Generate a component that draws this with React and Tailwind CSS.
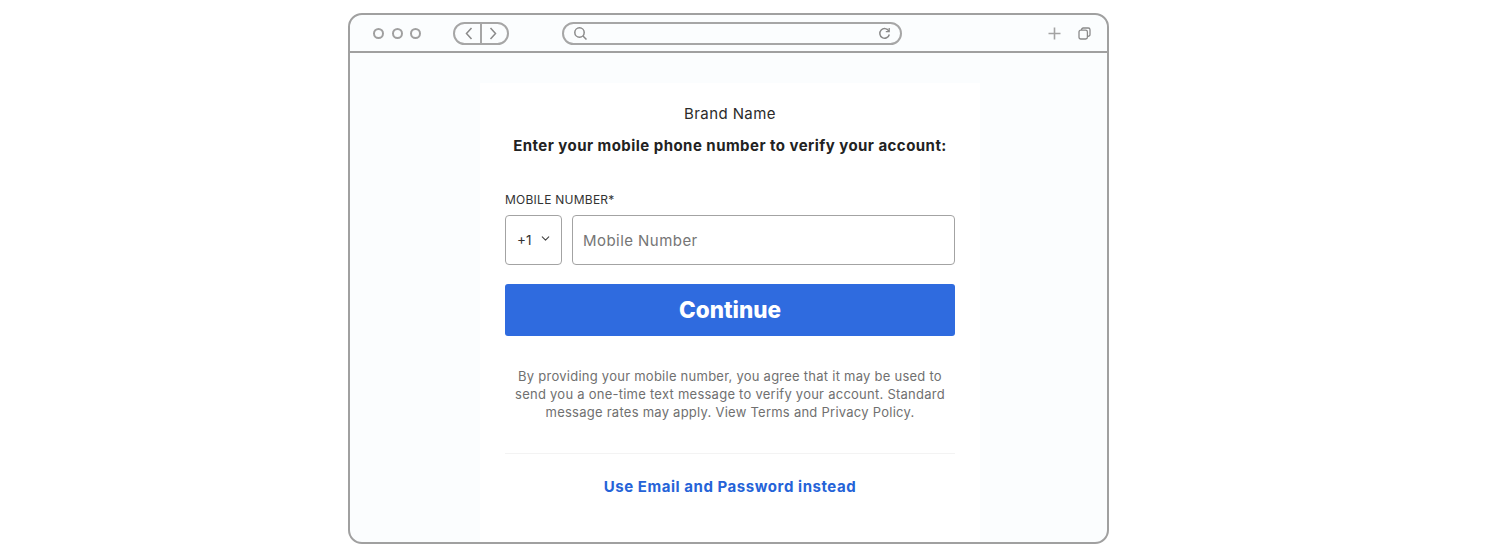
import { ChevronDown } from 'lucide-react';

const Toolbar = () => (
  <div className="flex items-center h-[38px] border-b-2 border-[#a0a0a0] pl-[23px] pr-[16px] shrink-0">
    {/* window dots */}
    <div className="flex gap-[7.5px]">
      <span className="w-[11px] h-[11px] rounded-full border-2 border-[#a0a0a0]" />
      <span className="w-[11px] h-[11px] rounded-full border-2 border-[#a0a0a0]" />
      <span className="w-[11px] h-[11px] rounded-full border-2 border-[#a0a0a0]" />
    </div>

    {/* back / forward */}
    <div className="flex items-center w-[56px] h-[23px] ml-[32px] rounded-full border-2 border-[#a6a6a6]">
      <div className="flex-1 h-full flex items-center justify-center border-r-2 border-[#a6a6a6] pl-[3px]">
        <svg width="8" height="13" viewBox="0 0 8 13" fill="none" stroke="#8a8a8a" strokeWidth="1.5">
          <path d="M6.5 1 L1.5 6.5 L6.5 12" />
        </svg>
      </div>
      <div className="flex-1 h-full flex items-center justify-center pr-[3px]">
        <svg width="8" height="13" viewBox="0 0 8 13" fill="none" stroke="#8a8a8a" strokeWidth="1.5">
          <path d="M1.5 1 L6.5 6.5 L1.5 12" />
        </svg>
      </div>
    </div>

    {/* address bar */}
    <div className="flex items-center justify-between w-[340px] h-[23px] ml-[53px] rounded-full border-2 border-[#a6a6a6] px-[9px]">
      <svg width="15" height="15" viewBox="0 0 15 15" fill="none" stroke="#8a8a8a" strokeWidth="1.5">
        <circle cx="6.5" cy="6.5" r="4.7" />
        <path d="M10 10 L13.5 13.5" />
      </svg>
      <svg width="13" height="13" viewBox="0 0 13 13" fill="none" stroke="#8a8a8a" strokeWidth="1.5">
        <path d="M10.8 4 A4.8 4.8 0 1 0 11.3 7.5" />
        <path d="M11.2 1 V4.6 H7.8" strokeWidth="1.3" />
      </svg>
    </div>

    <div className="flex items-center gap-[17px] ml-auto">
      <svg width="13" height="13" viewBox="0 0 13 13" fill="none" stroke="#a3a3a3" strokeWidth="1.6">
        <path d="M6.5 0.5 V12.5 M0.5 6.5 H12.5" />
      </svg>
      <svg width="13" height="13" viewBox="0 0 13 13" fill="none" stroke="#8a8a8a" strokeWidth="1.3">
        <rect x="1" y="3.2" width="8.4" height="8.8" rx="1.8" />
        <path d="M3.6 3 V2.6 A1.6 1.6 0 0 1 5.2 1 H10.2 A1.8 1.8 0 0 1 12 2.8 V7.6 A1.6 1.6 0 0 1 9.6 9" />
      </svg>
    </div>
  </div>
);

const App = () => {
  return (
    <div className="h-[559px] bg-white pl-[348px] pt-[13px] font-['Inter',sans-serif]">
      <div className="flex flex-col w-[761px] h-[531px] rounded-[14px] border-2 border-[#a0a0a0] bg-[#fbfdfe] overflow-hidden">
        <Toolbar />

        <div className="flex-1 w-[500px] mt-[30px] ml-[130px] bg-white px-[25px] pt-[22px]">
          <p className="text-center text-[15px] leading-[18px] tracking-[0.4px] text-[#2b2b2b]">Brand Name</p>
          <h2 className="mt-[14px] text-center text-[15px] leading-[18px] font-bold tracking-[0.46px] text-[#222222]">
            Enter your mobile phone number to verify your account:
          </h2>

          <label className="block mt-[37px] text-[12px] leading-[16px] tracking-[0.25px] text-[#333333]">MOBILE NUMBER*</label>
          <div className="flex gap-[10px] mt-[7px]">
            <div className="flex items-center justify-between w-[57px] h-[50px] rounded-[4px] border border-[#a3a3a3] pl-[11px] pr-[9px] text-[13.5px] text-[#333333]">
              +1
              <ChevronDown size={13} strokeWidth={2} className="text-[#444444] mb-[3px]" />
            </div>
            <div className="flex items-center flex-1 h-[50px] rounded-[4px] border border-[#a3a3a3] pl-[10px] pt-[2px] text-[15px] tracking-[0.45px] text-[#757575]">
              Mobile Number
            </div>
          </div>

          <button className="block w-full h-[52px] mt-[19px] rounded-[3px] bg-[#2f6bdf] text-white text-[22.5px] font-extrabold">
            Continue
          </button>

          <p className="mt-[31px] text-center text-[13px] leading-[18px] tracking-[0.25px] text-[#707070]">
            By providing your mobile number, you agree that it may be used to send you a one-time text message to verify your account. Standard message rates may apply. View Terms and Privacy Policy.
          </p>

          <div className="mt-[32px] border-t border-[#f3f3f3]" />

          <p className="mt-[24px] text-center text-[15px] leading-[18px] font-bold tracking-[0.55px] text-[#2563d8]">Use Email and Password instead</p>
        </div>
      </div>
    </div>
  );
};

export default App;
